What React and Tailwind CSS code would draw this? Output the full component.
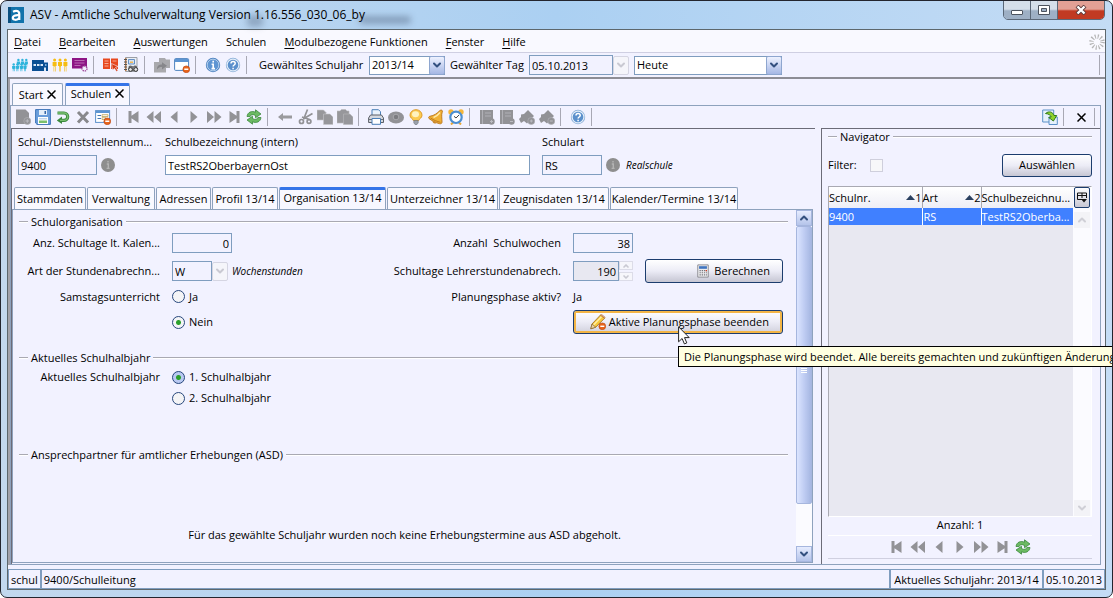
// App.jsx
// ASV main window: title bar, menu, toolbars, school form and navigator.

import { useState } from 'react';
import { ChevronDown, ChevronUp } from 'lucide-react';

const MENU = [
  ['D', 'atei'], ['B', 'earbeiten'], ['A', 'uswertungen'], ['', 'Schulen'],
  ['M', 'odulbezogene Funktionen'], ['F', 'enster'], ['H', 'ilfe'],
];

const TABS = [
  ['Stammdaten', 'w-[72px]'],
  ['Verwaltung', 'w-[68px]'],
  ['Adressen', 'w-[55px]'],
  ['Profil 13/14', 'w-[66px]'],
  ['Organisation 13/14', 'w-[107px]'],
  ['Unterzeichner 13/14', 'w-[111px]'],
  ['Zeugnisdaten 13/14', 'w-[110px]'],
  ['Kalender/Termine 13/14', 'w-[128px]'],
];

const G = '#929296';

/* ---------- Icons ---------- */

function Minus() {
  return (
    <g>
      <circle cx="12.3" cy="12.3" r="3.4" fill="#e8641b" stroke="#b8420c" strokeWidth=".6" />
      <path d="M10.3 12.3h4" stroke="#fff" strokeWidth="1.4" />
    </g>
  );
}

const person = (x, y, c) => (
  <g fill={c}>
    <circle cx={x} cy={y} r="1.5" />
    <path d={`M${x - 2} ${y + 2}h4v4h-1v5.5h-.6v-5h-.8v5h-.6v-5.500h-1z`} />
  </g>
);

const kind = (x, y) => (
  <g fill="#2fb4dc">
    <circle cx={x} cy={y} r="1.200" />
    <path d={`M${x - 1.6} ${y + 1.6}h3.200v2.600h-.7v2.600h-.6v-2h-.6v2h-.6v-2.600h-.7z`} />
  </g>
);

const ICONS = {
  schueler: (
    <g>{kind(6.400, 3)}{kind(10.400, 3)}{kind(14.300, 3)}{kind(1.700, 7.500)}{kind(5.400, 7.500)}{kind(9.400, 7.500)}{kind(13, 7.500)}</g>
  ),
  klassen: (
    <g><path d="M0 3h12v2.500h4V14H0z" fill="#0b4f93" /><path d="M1.500 7h2.500v2H1.500zM5 7h2.500v2H5zM8.500 7H11v2H8.500z" fill="#dbe8f6" /><path d="M13 7h1.500v2H13z" fill="#7fb0dd" /><path d="M12 10.500h2V14h-2z" fill="#dbe8f6" /></g>
  ),
  lehrer: (
    <g>{person(2.6, 3, '#f6bd12')}{person(8, 3, '#f6bd12')}{person(13.4, 3, '#f6bd12')}</g>
  ),
  unterricht: (
    <g><path d="M0 1h15v10.500H0z" fill="#8d1585" /><path d="M2.500 3.500h10M2.500 6h10M2.500 8.500h6" stroke="#b96bb4" /><circle cx="12.500" cy="11.500" r="2.500" fill="#f2f2ff" stroke="#a04a9b" strokeDasharray="1.4 .8" strokeWidth="1.4" /></g>
  ),
  buch: (
    <g><path d="M0 1.500h7v10.500H0zM8 1.500h7v10.500H8z" fill="#e8481f" /><path d="M1.500 4h4M1.500 6.500h4M1.500 9h4M9.500 4h4" stroke="#fbb7a0" strokeWidth=".9" /><path d="M8.500 6.500l6.500 3-2.500.9 2.500 3.200-1.400 1-2.300-3.300-1.600 1.900z" fill="#d8380f" stroke="#f2f2ff" strokeWidth=".6" /></g>
  ),
  suchbuch: (
    <g><path d="M2.500 .500h11.500v14H2.500z" fill="#eceff4" stroke="#9b9ea5" /><path d="M5.500 2.500h6V7h-6z" fill="#d3e3f5" stroke="#5a86bd" strokeWidth=".9" /><path d="M7 4.500h3v1.500H7z" fill="#f3ba55" /><path d="M2.800 1v13" stroke="#c2773c" strokeWidth="1.300" /><path d="M1 2.500h3M1 5h3M1 7.500h3M1 10h3M1 12.500h3" stroke="#555" /><path d="M6 9.800c0-1 2.500-1 3 0h1.500c.5-1 3-1 3 0v3.500H6z" fill="#8a8a90" stroke="#3a3a3a" strokeWidth=".8" /><circle cx="7.500" cy="12.500" r="1.900" fill="#e8e8e8" stroke="#333" /><circle cx="12.800" cy="12.500" r="1.900" fill="#e8e8e8" stroke="#333" /></g>
  ),
  ordner: (
    <g><path d="M5 1h6l1 1.500h4V11h-4v4.500H0V5h5z" fill="#a9a9ad" /><path d="M3 12.500c0-4 2-5 5-5V5.200l5 3.600-5 3.600V10c-2 0-3.500.5-5 2.500z" fill="#87878b" /></g>
  ),
  fensterMinus: (
    <g><rect x=".6" y="1.600" width="14" height="11.800" rx="1" fill="#fff" stroke="#4e83bf" /><path d="M1 2h13.300v3H1z" fill="#5c94d2" /><Minus /></g>
  ),
  info: (
    <g><circle cx="8" cy="8" r="7.200" fill="#4a80bf" /><circle cx="8" cy="8" r="5.900" fill="#5f95d2" stroke="#c5daf1" strokeWidth=".9" /><path d="M8.200 3.700v1.900M6.600 7.200h1.600v4.200M6.500 11.600h3.500" stroke="#fff" strokeWidth="1.600" fill="none" /></g>
  ),
  hilfe: (
    <g><circle cx="8" cy="8" r="7.200" fill="#88add6" /><circle cx="8" cy="8" r="5.900" fill="#5b90cc" stroke="#e2edf9" strokeWidth="1.200" /><path d="M6 6.500c0-2.600 4.200-2.600 4.200 0C10.200 8 8.100 8 8.100 9.500M8.100 10.700v1.600" stroke="#fff" strokeWidth="1.500" fill="none" /></g>
  ),
  neu: (
    <g fill={G}><path d="M1 .500h9.500l3.500 3.500V9l-4 6H1z" /><circle cx="12.300" cy="12" r="3.500" stroke="#b0b0b5" strokeWidth=".7" /><path d="M10.500 12h3.600M12.300 10.200v3.600" stroke="#bcbcc2" /></g>
  ),
  speichern: (
    <g><path d="M.6 .600h14.800v14.800H2L.6 14z" fill="#6b9ddb" stroke="#3f74b8" /><path d="M4 1h8v5H4z" fill="#e6effa" /><path d="M9.500 2h1.500v3H9.500z" fill="#3465a4" /><path d="M3 8h10v7H3z" fill="#fff" /><path d="M4 9.800h8" stroke="#a9c3e2" /><path d="M4 11.500h8v2.500H4z" fill="#7cc06c" /></g>
  ),
  undo: (
    <g><path d="M2.500 4h6.500a3.700 3.700 0 010 7.400H6.500" fill="none" stroke="#3b8a3d" strokeWidth="3.200" /><path d="M7 7.500v7.500L1.800 11.400z" fill="#3b8a3d" /><path d="M3 4h6a3.700 3.700 0 010 7.400H5" fill="none" stroke="#79bf70" strokeWidth="1.400" /></g>
  ),
  loeschen: <path d="M3 3l10 10.500M13 3L3 13.500" stroke="#88888c" strokeWidth="3" />,
  maskeMinus: (
    <g><rect x=".6" y="1.600" width="14" height="11.800" fill="#fff" stroke="#5c90cb" /><path d="M1 2h13.300v2H1z" fill="#5c94d2" /><path d="M2.500 6.500h3.500M2.500 9.500h3.500" stroke="#4478b5" /><path d="M7 5.700h6v1.800H7zM7 8.700h4v1.800H7z" fill="none" stroke="#b8983f" strokeWidth=".7" /><Minus /></g>
  ),
  erster: <path d="M2.500 2h3v4.700L12.500 2v12L5.500 9.300V14h-3z" fill={G} />,
  zurueckSchnell: <path d="M.500 8l7-6v12zM8 8l7-6v12z" fill={G} />,
  zurueck: <path d="M4.500 8l7-6v12z" fill={G} />,
  vor: <path d="M11.500 8l-7-6v12z" fill={G} />,
  vorSchnell: <path d="M15.500 8l-7-6v12zM8 8L1 2v12z" fill={G} />,
  letzter: <path d="M13.500 2h-3v4.700L3.500 2v12l7-4.700V14h3z" fill={G} />,
  refresh: (
    <g fill="#6cba63" stroke="#2f7f30" strokeWidth=".7"><path d="M1 7.500C1.500 3 6 1.500 9.500 3.200V.8L15 5l-5.500 3.800V6.500C7 5 4.500 5.500 4.200 7.500z" /><path d="M15 8.500c-.5 4.500-5 6-8.500 4.300v2.400L1 11l5.500-3.800v2.300c2.500 1.500 5 1 5.300-1z" /></g>
  ),
  pfeil: <path d="M1 8l5-4v2.500h9v3H6V12z" fill="#9a9a9e" />,
  schere: (
    <g fill="none" stroke={G} strokeWidth="1.700"><path d="M10.500 .500L6.500 10.500M15.500 4.500L7 9.500M5 8l7.500 2.500" /><circle cx="4.500" cy="12.500" r="2" /><circle cx="12" cy="12.500" r="1.900" /></g>
  ),
  kopieren: (
    <g fill="#97979b" stroke="#c6c6cc" strokeWidth=".6"><path d="M0 1h6.500l2.500 2.500V11H0z" /><path d="M6.500 5H13l3 3v7.500H6.500z" /></g>
  ),
  einfuegen: (
    <g fill="#97979b" stroke="#b8b8be" strokeWidth=".6"><path d="M0 2h3l1.500-1.500h4L10 2h2v12H0z" /><path d="M6.500 5H13l3 3v7.500H6.500z" /></g>
  ),
  drucken: (
    <g><path d="M4 .700h6.500l2 2V7H4z" fill="#e9f2fc" stroke="#4a7fb8" /><path d="M2.500 6h11l2 3v4.500H.600V9z" fill="#d4d8df" stroke="#5c6068" /><path d="M1 10.500h14" stroke="#6d7179" /><path d="M4 9.500h8.500v5.800H4z" fill="#fff" stroke="#4a7fb8" /></g>
  ),
  vorschau: (
    <g><ellipse cx="8" cy="8.500" rx="8" ry="6" fill="#929296" /><circle cx="8" cy="8" r="2.800" fill="#7c7c80" stroke="#a8a8ac" /></g>
  ),
  lampe: (
    <g><path d="M8 .700a6 5.500 0 016 5.500c0 2.800-2.800 3.500-3.300 5.300H5.300C4.800 9.700 2 9 2 6.200A6 5.500 0 018 .700z" fill="#fbcb51" stroke="#dd9a29" /><ellipse cx="7.500" cy="5.300" rx="3.500" ry="3" fill="#fff3bf" /><path d="M5.800 11.500h4.400v2.300L9 15.500H7l-1.200-1.700z" fill="#9aa0aa" stroke="#6d737c" strokeWidth=".6" /></g>
  ),
  glocke: (
    <g><path d="M12 1.500c1.200-1.400 3.200.2 2.200 1.700-1 2.300-.2 6.800-.2 9.800 0 1.500-1 2-2.500 1.700C7.500 13.500 4 12 1 9.500c-.8-.8-.3-2 .8-2.200C6.500 6.500 8.800 4.500 12 1.500z" fill="#f0b136" stroke="#b9741a" strokeWidth=".9" /><path d="M2.500 9c3 2 6.500 3.500 10 4.300" stroke="#b9741a" fill="none" strokeWidth=".9" /><path d="M5.500 8.500C8.500 7.500 10.500 5.500 12 3.500" stroke="#ffe9a8" strokeWidth="1.500" fill="none" /><path d="M4.500 12c0 2 2 3.200 4 1.900z" fill="#c8821d" /></g>
  ),
  wecker: (
    <g><circle cx="3" cy="3" r="2.700" fill="#f4b63c" /><circle cx="13" cy="3" r="2.700" fill="#f4b63c" /><path d="M3 15.500l2-2M13 15.500l-2-2" stroke="#e9a735" strokeWidth="2" /><circle cx="8" cy="8.300" r="5.700" fill="#fff" stroke="#4c8fd2" strokeWidth="2.200" /><path d="M11 6L8 9 6 7.300" stroke="#444" fill="none" /></g>
  ),
  heftPlus: (
    <g fill={G}><path d="M1 1h13v9h-3v5H1z" /><circle cx="12.500" cy="12.500" r="3.200" /><path d="M3.500 1v14M6 4h6M6 7h6" stroke="#b9b9bf" strokeWidth=".8" /><path d="M11 12.500h3M12.500 11v3" stroke="#bcbcc2" /></g>
  ),
  heftMinus: (
    <g fill={G}><path d="M1 1h13v9h-3v5H1z" /><circle cx="12.500" cy="12.500" r="3.200" /><path d="M3.500 1v14M6 4h6M6 7h6" stroke="#b9b9bf" strokeWidth=".8" /><path d="M11 12.500h3" stroke="#bcbcc2" /></g>
  ),
  hausPlus: (
    <g fill={G}><path d="M0 10l2-2V5.500l3-.5L9 1l6 6-2 2-5 5.500L5 12l-3 2z" /><circle cx="12.300" cy="12" r="3.500" stroke="#b4b4ba" strokeWidth=".6" /><path d="M10.800 12h3M12.300 10.500v3" stroke="#bcbcc2" /></g>
  ),
  hausMinus: (
    <g fill={G}><path d="M0 10l2-2V5.500l3-.5L9 1l6 6-2 2-5 5.500L5 12l-3 2z" /><circle cx="12.300" cy="12" r="3.500" stroke="#b4b4ba" strokeWidth=".6" /><path d="M10.800 12h3" stroke="#bcbcc2" /></g>
  ),
  wechseln: (
    <g><path d="M.7 1h11v12H.7z" fill="#e6f1fc" stroke="#5b90c8" /><path d="M7 8h8.300v7.500H7z" fill="#e6f1fc" stroke="#5b90c8" /><path d="M3.500 4.500C7 1.500 11 3 12 6.500h2.700l-3.300 5.500-4.700-3.500 2.500-.6C8.500 6 6.500 4.800 3.500 4.500z" fill="#8fd22c" stroke="#2f7a1a" /></g>
  ),
  rechner: (
    <g><path d="M2 1h12v14H2z" fill="#ececef" stroke="#85858c" /><path d="M3.500 2.500h9v3h-9z" fill="#3f74c0" /><path d="M4 7.500h8.500M4 10h8.500M4 12.500h8.500" stroke="#77777e" strokeWidth="1.300" strokeDasharray="1.500 1" /><path d="M11 7.500h1.500" stroke="#d03a20" strokeWidth="1.300" /></g>
  ),
  stift: (
    <g><path d="M.8 14.800L2 10l8.500-9 4 3.300-8.800 8.900z" fill="#f8c93d" stroke="#a37324" strokeWidth=".9" /><path d="M3.500 11l8-8.300" stroke="#fff0a8" strokeWidth="1.300" /><path d="M10.500 1l1-.7 3.700 3-.7 1z" fill="#f1a48d" stroke="#a37324" strokeWidth=".5" /><path d="M.8 14.800L2 10l3.700 3.200z" fill="#ead3a6" stroke="#7b5b2a" strokeWidth=".6" /><Minus /></g>
  ),
};

function Icon({ name, className = 'size-4' }) {
  return <svg viewBox="0 0 16 16" className={`shrink-0 ${className}`} aria-hidden="true">{ICONS[name]}</svg>;
}

function ToolButton({ name }) {
  return (
    <button type="button" aria-label={name} className="flex w-5 shrink-0 justify-center">
      <Icon name={name} />
    </button>
  );
}

function Sep() {
  return <span className="mr-[7px] ml-[3px] h-[18px] w-px shrink-0 bg-[#a8a8b4]" />;
}

function ToolGroup({ names }) {
  return <>{names.map((n) => <ToolButton key={n} name={n} />)}<Sep /></>;
}

function InfoDot() {
  return (
    <svg viewBox="0 0 14 14" className="size-[14px] shrink-0" aria-hidden="true">
      <circle cx="7" cy="7" r="7" fill="#8e8e8e" />
      <path d="M7 3v1.500M5.800 6H7.300v4M5.600 10.400h3" stroke="#b4b4b4" strokeWidth="1.400" fill="none" />
    </svg>
  );
}

/* ---------- Form parts ---------- */

function ArrowBox({ disabled }) {
  return (
    <span className={`pointer-events-none flex w-4 items-center justify-center rounded-[2px] border ${disabled
      ? 'border-[#d5d5e2] bg-[#f5f5fa] text-[#c9c9d2]'
      : 'border-[#8ea6cf] bg-linear-to-b from-[#eef2ff] to-[#a5b7e4] text-[#33507f]'}`}>
      <ChevronDown className="size-3" strokeWidth={4} />
    </span>
  );
}

function Combo({ label, value, className }) {
  return (
    <span className={`relative flex h-[19px] ${className}`}>
      <select aria-label={label} className="w-full appearance-none border border-[#7f9dbf] bg-white pl-[2px]">
        <option>{value}</option>
      </select>
      <span className="absolute inset-y-0 right-0 flex"><ArrowBox /></span>
    </span>
  );
}

function Feld({ className, ...props }) {
  return <input type="text" className={`h-5 border border-[#7f9dbf] px-[2px] ${className}`} {...props} />;
}

function Radio({ name, label, checked, onChange, hot }) {
  return (
    <label className="flex items-center gap-1">
      <input type="radio" name={name} checked={checked} onChange={onChange}
        className={`size-[13px] appearance-none rounded-full border border-[#27477c] checked:bg-[radial-gradient(circle,#2ba02b_0_2px,transparent_3px)] ${hot ? 'bg-[#b9c9f2]' : 'bg-[#f4f4f6]'}`} />
      {label}
    </label>
  );
}

function Legende({ children }) {
  return (
    <h2 className="flex h-4 items-center gap-[3px]">
      <span className="h-[2px] w-[9px] border-b border-white bg-[#a9a9b2]" />
      {children}
      <span className="h-[2px] flex-1 border-b border-white bg-[#a9a9b2]" />
    </h2>
  );
}

function Titelleiste() {
  return (
    <header className="relative flex h-7 shrink-0 items-center gap-[6px] pl-px">
      <span className="absolute top-[14px] left-60 h-3 w-4 rounded bg-[#33435c]/30 blur-[3px]" />
      <span className="absolute top-[15px] left-[352px] h-2 w-[52px] rounded bg-[#33435c]/35 blur-[3px]" />
      <svg viewBox="0 0 16 16" className="relative size-4" aria-hidden="true">
        <path d="M0 0h16v16H0z" fill="#1173ab" />
        <path d="M0 0h3v16H0z" fill="#0a4f80" />
        <path d="M5 4.800c3-1.700 6.300-1 6.300 2.200v6M11 8.200c-4-.2-6.200.6-6.200 2.600 0 2.600 4.700 2.600 6.200.2" fill="none" stroke="#fff" strokeWidth="2.200" />
      </svg>
      <h1 className="relative text-xs">ASV - Amtliche Schulverwaltung Version 1.16.556_030_06_by</h1>
      <div className="absolute -top-px right-px flex h-5 overflow-hidden rounded-b-[5px] border border-[#5b6878]">
        <button type="button" aria-label="Minimieren" className="flex w-[27px] items-center justify-center border-r border-[#5b6878] bg-linear-to-b from-[#d5dfea] from-45% to-[#9eb0c5] to-55%">
          <span className="mt-1 h-[5px] w-3 rounded-[1px] border border-[#4c535e] bg-white" />
        </button>
        <button type="button" aria-label="Maximieren" className="flex w-[27px] items-center justify-center border-r border-[#5b6878] bg-linear-to-b from-[#d5dfea] from-45% to-[#9eb0c5] to-55%">
          <svg viewBox="0 0 12 10" className="h-[10px] w-3" aria-hidden="true"><path d="M.5.5h11v9H.5z" fill="#fff" stroke="#4c535e" /><path d="M3.500 3.500h5v3h-5z" fill="#9eb0c5" stroke="#4c535e" /></svg>
        </button>
        <button type="button" aria-label="Schließen" className="flex w-[46px] items-center justify-center bg-linear-to-b from-[#e2a095] from-45% to-[#c13a22] to-55%">
          <svg viewBox="0 0 12 10" className="h-[10px] w-3" aria-hidden="true"><path d="M2 1l8 8M10 1L2 9" stroke="#5a3a3a" strokeWidth="4" /><path d="M2.500 1.500l7 7M9.500 1.500l-7 7" stroke="#fff" strokeWidth="2.400" /></svg>
        </button>
      </div>
    </header>
  );
}

function Menue() {
  return (
    <nav className="flex h-[23px] shrink-0 items-center border-b border-[#cfcfe2] bg-[#f9f9ff] pt-px pl-[6px]">
      <div className="flex flex-1 gap-[18px]">
        {MENU.map(([k, rest]) => (
          <button key={rest} type="button"><span className="underline underline-offset-2">{k}</span>{rest}</button>
        ))}
      </div>
      <svg viewBox="0 0 16 16" className="size-4" aria-hidden="true">
        <circle cx="8" cy="8" r="5.500" fill="none" stroke="#b5b5b5" strokeWidth="4.500" strokeDasharray="1.100 1.780" />
      </svg>
    </nav>
  );
}

function Werkzeuge() {
  return (
    <div className="flex h-[26px] shrink-0 items-center border-b-2 border-[#8d8d95] pl-[2px]">
      <ToolGroup names={['schueler', 'klassen', 'lehrer', 'unterricht']} />
      <ToolGroup names={['buch', 'suchbuch']} />
      <ToolGroup names={['ordner', 'fensterMinus']} />
      <ToolGroup names={['info', 'hilfe']} />
      <span className="ml-[5px] w-[110px]">Gewähltes Schuljahr</span>
      <Combo label="Gewähltes Schuljahr" value="2013/14" className="w-[76px]" />
      <label htmlFor="tag" className="ml-[5px] w-[79px]">Gewählter Tag</label>
      <Feld id="tag" defaultValue="05.10.2013" className="w-[84px] bg-[#f2f2ff]" />
      <span className="mr-[5px] flex h-[19px]"><ArrowBox disabled /></span>
      <Combo label="Tag" value="Heute" className="w-[148px]" />
      <span className="mr-[5px] ml-auto h-5 w-px bg-[#a8a8b4]" />
    </div>
  );
}

/* ---------- Left: school form ---------- */

function Kopfdaten() {
  return (
    <div className="grid grid-cols-[135px_365px_1fr] gap-x-3 gap-y-[5px] pt-[5px] pl-[6px]">
      <label htmlFor="nr" className="h-4">Schul-/Dienststellennum...</label>
      <label htmlFor="bez" className="h-4">Schulbezeichnung (intern)</label>
      <label htmlFor="art" className="h-4">Schulart</label>
      <div className="flex items-center gap-1">
        <Feld id="nr" defaultValue="9400" className="w-[79px] bg-[#f2f2ff]" /><InfoDot />
      </div>
      <Feld id="bez" defaultValue="TestRS2OberbayernOst" className="w-full bg-white" />
      <div className="flex items-center gap-1">
        <Feld id="art" defaultValue="RS" className="w-[60px] bg-[#f2f2ff]" /><InfoDot />
        <i className="pl-[2px] text-[10px]">Realschule</i>
      </div>
    </div>
  );
}

function Organisation() {
  const [samstag, setSamstag] = useState('Nein');
  const [halbjahr, setHalbjahr] = useState(1);

  return (
    <div className="min-w-0 flex-1 pt-1">
      <div className="pr-2 pl-[6px]"><Legende>Schulorganisation</Legende></div>
      <div className="mt-[3px] mr-[13px] grid grid-cols-[147px_1fr_auto_60px_138px] grid-rows-[20px_24px_15px_24px] items-center gap-x-3 gap-y-[6px]">
        <label htmlFor="tage" className="text-right">Anz. Schultage lt. Kalen...</label>
        <div className="flex"><Feld id="tage" defaultValue="0" className="w-[60px] bg-[#f2f2ff] text-right" /></div>
        <label htmlFor="wochen" className="text-right whitespace-pre">Anzahl  Schulwochen</label>
        <Feld id="wochen" defaultValue="38" className="w-full bg-[#f2f2ff] text-right" />
        <span />

        <label htmlFor="abr" className="text-right">Art der Stundenabrechn...</label>
        <div className="flex items-center">
          <Feld id="abr" defaultValue="W" className="w-10 bg-[#f2f2ff]" />
          <span className="flex h-[19px]"><ArrowBox disabled /></span>
          <i className="pl-1 text-[10px]">Wochenstunden</i>
        </div>
        <label htmlFor="lehrer" className="text-right">Schultage Lehrerstundenabrech.</label>
        <div className="flex">
          <Feld id="lehrer" defaultValue="190" className="w-[46px] bg-[#e8e8f1] text-right" />
          <span className="flex w-[14px] flex-col justify-between text-[#c9c9d2]">
            <button type="button" aria-label="mehr" className="flex h-[9px] items-center justify-center border border-[#dcdce8] bg-[#f6f6fb]"><ChevronUp className="size-2" strokeWidth={5} /></button>
            <button type="button" aria-label="weniger" className="flex h-[9px] items-center justify-center border border-[#dcdce8] bg-[#f6f6fb]"><ChevronDown className="size-2" strokeWidth={5} /></button>
          </span>
        </div>
        <button type="button" className="flex h-6 items-center justify-end gap-1 rounded-[3px] border border-[#1c3d6e] bg-linear-to-b from-white via-[#ececf6] to-[#c6c6d3] pr-3">
          <Icon name="rechner" className="size-[14px]" />Berechnen
        </button>

        <span className="text-right">Samstagsunterricht</span>
        <Radio name="samstag" label="Ja" checked={samstag === 'Ja'} onChange={() => setSamstag('Ja')} />
        <span className="text-right">Planungsphase aktiv?</span>
        <span>Ja</span>
        <span />

        <span />
        <Radio name="samstag" label="Nein" checked={samstag === 'Nein'} onChange={() => setSamstag('Nein')} />
        <span />
        <div className="relative col-span-2">
          <button type="button" aria-describedby="hinweis" className="flex h-6 w-full items-center justify-end gap-[3px] rounded-[3px] border border-[#1c3d6e] bg-linear-to-b from-white via-[#ececf6] to-[#d0d0dc] pr-[13px] inset-ring-2 inset-ring-[#f3b546]">
            <Icon name="stift" />Aktive Planungsphase beenden
          </button>
          <svg viewBox="0 0 12 19" className="absolute top-4 left-[105px] z-20 h-[19px] w-3" aria-hidden="true">
            <path d="M.6.800v15l3.500-3.300 2.300 5.400 2.400-1-2.300-5.300h4.700z" fill="#fff" stroke="#222" />
          </svg>
          <div role="tooltip" id="hinweis" className="absolute top-9 left-[105px] z-10 flex h-[21px] items-center border border-black bg-[#ffffe1] px-[5px] whitespace-nowrap">
            Die Planungsphase wird beendet. Alle bereits gemachten und zukünftigen Änderungen
          </div>
        </div>
      </div>

      <div className="mt-4 pr-2 pl-[6px]"><Legende>Aktuelles Schulhalbjahr</Legende></div>
      <div className="mt-[3px] grid grid-cols-[147px_1fr] gap-x-3 gap-y-[5px]">
        <span className="text-right">Aktuelles Schulhalbjahr</span>
        <Radio name="halbjahr" label="1. Schulhalbjahr" checked={halbjahr === 1} onChange={() => setHalbjahr(1)} hot />
        <span />
        <Radio name="halbjahr" label="2. Schulhalbjahr" checked={halbjahr === 2} onChange={() => setHalbjahr(2)} />
      </div>

      <div className="mt-[41px] pr-2 pl-[6px]"><Legende>Ansprechpartner für amtlicher Erhebungen (ASD)</Legende></div>
      <p className="mt-16 text-center">Für das gewählte Schuljahr wurden noch keine Erhebungstermine aus ASD abgeholt.</p>
    </div>
  );
}

function Bildlauf() {
  return (
    <div className="flex w-4 shrink-0 flex-col bg-[#fbfbff]">
      <button type="button" aria-label="nach oben" className="flex h-4 items-center justify-center border border-[#a6b6de] bg-linear-to-b from-[#e6ecff] to-[#b5c4ea] text-[#33507f]"><ChevronUp className="size-3" strokeWidth={4} /></button>
      <div className="flex basis-[79%] flex-col items-center justify-center gap-px rounded-[2px] border border-[#a6b6de] bg-linear-to-r from-[#dce5ff] via-[#c0cdf3] to-[#a6b7e2] pt-2">
        <span className="h-px w-[6px] bg-white" /><span className="h-px w-[6px] bg-white" /><span className="h-px w-[6px] bg-white" /><span className="h-px w-[6px] bg-white" />
      </div>
      <div className="flex-1" />
      <button type="button" aria-label="nach unten" className="flex h-4 items-center justify-center border border-[#a6b6de] bg-linear-to-b from-[#e6ecff] to-[#b5c4ea] text-[#33507f]"><ChevronDown className="size-3" strokeWidth={4} /></button>
    </div>
  );
}

function Schulmaske() {
  const [tab, setTab] = useState('Organisation 13/14');
  return (
    <section className="flex min-w-0 flex-1 flex-col border-t border-l border-[#6c6c78]">
      <Kopfdaten />
      <div role="tablist" className="mt-3 flex items-end gap-px pl-[2px] whitespace-nowrap">
        {TABS.map(([name, w]) => (
          <button key={name} type="button" role="tab" aria-selected={tab === name} onClick={() => setTab(name)}
            className={`flex h-[22px] shrink-0 items-center justify-center rounded-t-[2px] border border-b-0 border-[#8ea2bd] ${w} ${tab === name
              ? 'border-t-3 border-t-[#3474e8] bg-[#f7f7ff] pb-1'
              : 'bg-[#f9f9ff] pt-px'}`}>
            {name}
          </button>
        ))}
      </div>
      <div className="mr-[2px] mb-px flex min-h-0 flex-1 border border-[#8ea2bd]">
        <Organisation />
        <Bildlauf />
      </div>
    </section>
  );
}

/* ---------- Right: navigator ---------- */

function Sortiert({ nr }) {
  return (
    <span className="flex items-center">
      <svg viewBox="0 0 9 5" className="h-[5px] w-[9px]" aria-hidden="true"><path d="M0 5L4.500 0 9 5z" fill="#2b4060" /></svg>
      {nr}
    </span>
  );
}

function Navigator() {
  return (
    <section className="flex w-[279px] shrink-0 flex-col border-t border-l border-[#6c6c78] pr-2 pl-[6px]">
      <Legende>Navigator</Legende>
      <div className="mt-2 mb-[9px] flex h-6 items-center">
        <label htmlFor="filter" className="w-[42px]">Filter:</label>
        <input id="filter" type="checkbox" className="size-[13px] appearance-none border border-[#cfcfdc] bg-[#f7f7f9]" />
        <button type="button" className="ml-auto h-[23px] w-[90px] rounded-[3px] border border-[#1c3d6e] bg-linear-to-b from-white via-[#ececf6] to-[#c6c6d3]">Auswählen</button>
      </div>
      <div className="flex min-h-0 flex-1 border border-t-[#a9a9b2] border-r-white border-b-white border-l-[#a9a9b2] bg-[#e8e8f1]">
        <div className="min-w-0 flex-1">
          <table className="w-full table-fixed border-collapse text-left">
            <thead>
              <tr className="h-[21px] bg-linear-to-b from-white to-[#eeeef6]">
                <th className="w-[93px] border-r border-[#a9a9b2] font-normal"><div className="flex justify-between">Schulnr.<Sortiert nr="1" /></div></th>
                <th className="w-[59px] border-r border-[#a9a9b2] font-normal"><div className="flex justify-between">Art<Sortiert nr="2" /></div></th>
                <th className="font-normal whitespace-nowrap">Schulbezeichnu...</th>
              </tr>
            </thead>
            <tbody>
              <tr className="h-[17px] bg-[#4080ff] leading-4 text-white">
                <td className="border-r border-white">9400</td>
                <td className="border-r border-white pl-px">RS</td>
                <td className="whitespace-nowrap">TestRS2Oberba...</td>
              </tr>
            </tbody>
          </table>
        </div>
        <div className="flex w-[18px] flex-col items-center bg-[#fbfbff] text-[#cfcfd6]">
          <button type="button" aria-label="Spalten" className="mb-1 flex h-[21px] w-4 items-center justify-center rounded-[2px] border border-[#1c3d6e] bg-linear-to-b from-white to-[#c6c6d3]">
            <svg viewBox="0 0 10 11" className="h-[11px] w-[10px]" aria-hidden="true"><path d="M.5 1h9v5M.5 1v6.500H5M.5 3.500h9M5 1v5" fill="none" stroke="#111" /><path d="M4 7h6L7 10.500z" fill="#111" /></svg>
          </button>
          <span className="flex size-4 items-center justify-center bg-[#f3f3f7]"><ChevronUp className="size-3" strokeWidth={4} /></span>
          <div className="flex-1" />
          <span className="flex size-4 items-center justify-center bg-[#f3f3f7]"><ChevronDown className="size-3" strokeWidth={4} /></span>
        </div>
      </div>
      <p className="border-b border-white pb-[2px] text-center">Anzahl: 1</p>
      <div className="mb-[5px] flex h-[23px] items-center justify-center gap-px border-b border-[#d0d0e0]">
        {['erster', 'zurueckSchnell', 'zurueck', 'vor', 'vorSchnell', 'letzter', 'refresh'].map((n) => <ToolButton key={n} name={n} />)}
      </div>
    </section>
  );
}

function Kreuz() {
  return <svg viewBox="0 0 9 9" className="size-[9px]" aria-hidden="true"><path d="M.5.500l8 8M8.500.500l-8 8" stroke="#000" strokeWidth="1.500" /></svg>;
}

export default function App() {
  return (
    <div className="flex h-screen min-h-[560px] flex-col overflow-hidden rounded-[7px] border border-[#23252e] bg-linear-to-r from-[#c3d8ee] via-[#abd0f2] to-[#c4dcf5] px-[6px] pb-[7px] font-['Open_Sans',sans-serif] text-[11px] leading-4 text-black">
      <Titelleiste />
      <div className="flex min-h-0 flex-1 flex-col border border-[#5d676c] bg-[#f2f2ff]">
        <Menue />
        <Werkzeuge />
        <main className="flex min-h-0 flex-1 flex-col border-l-2 border-[#a2a2aa] pt-1 pr-1">
          <div role="tablist" className="flex gap-[2px] pl-[2px]">
            <button type="button" role="tab" className="flex h-[22px] w-[51px] items-center justify-center gap-1 rounded-t-[2px] border border-b-0 border-[#8ea2bd] bg-[#f9f9ff]">Start<Kreuz /></button>
            <button type="button" role="tab" aria-selected="true" className="flex h-[22px] w-[65px] items-center justify-center gap-1 rounded-t-[2px] border border-t-3 border-b-0 border-[#8ea2bd] border-t-[#3474e8] bg-[#f7f7ff] pb-1">Schulen<Kreuz /></button>
          </div>
          <div className="flex min-h-0 flex-1 flex-col border border-[#8ea2bd]">
            <div className="flex h-[22px] shrink-0 items-center pl-[2px]">
              <ToolGroup names={['neu', 'speichern', 'undo', 'loeschen', 'maskeMinus']} />
              <ToolGroup names={['erster', 'zurueckSchnell', 'zurueck', 'vor', 'vorSchnell', 'letzter', 'refresh']} />
              <ToolGroup names={['pfeil', 'schere', 'kopieren', 'einfuegen']} />
              <ToolGroup names={['drucken', 'vorschau', 'lampe', 'glocke', 'wecker']} />
              <ToolGroup names={['heftPlus', 'heftMinus', 'hausPlus', 'hausMinus']} />
              <ToolGroup names={['hilfe']} />
              <span className="flex-1" />
              <ToolGroup names={['wechseln']} />
              <button type="button" aria-label="Reiter schließen" className="flex w-5 justify-center"><Kreuz /></button>
              <span className="mr-[5px] ml-[3px] h-[18px] w-px bg-[#a8a8b4]" />
            </div>
            <div className="flex min-h-0 flex-1 gap-[6px]">
              <Schulmaske />
              <Navigator />
            </div>
          </div>
        </main>
        <footer className="mt-1 flex h-5 shrink-0 border border-[#7f9dbf] leading-5 whitespace-nowrap">
          <span className="border-r-2 border-[#7f9dbf] px-[2px]">schul</span>
          <span className="flex-1 px-[2px]">9400/Schulleitung</span>
          <span className="border-x-2 border-[#7f9dbf] px-[3px]">Aktuelles Schuljahr: 2013/14</span>
          <span className="px-[2px]">05.10.2013</span>
        </footer>
      </div>
    </div>
  );
}
